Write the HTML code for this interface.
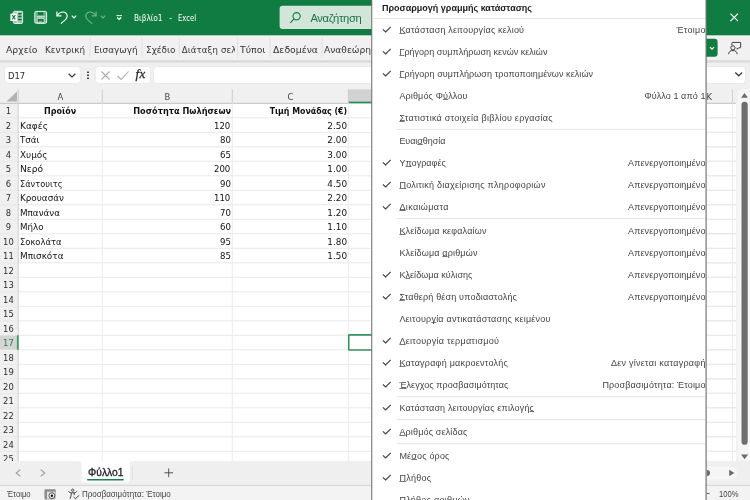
<!DOCTYPE html>
<html lang="el"><head><meta charset="utf-8"><title>Βιβλίο1 - Excel</title>
<style>
html,body{margin:0;padding:0;}
body{width:750px;height:500px;overflow:hidden;position:relative;background:#fff;font-family:"Liberation Sans",sans-serif;}
#app{will-change:transform;position:absolute;left:0;top:0;width:750px;height:500px;overflow:hidden;}
.t{position:absolute;white-space:nowrap;margin:0;padding:0;}
.r{position:absolute;display:block;}
u{text-decoration:underline;text-decoration-thickness:1px;text-underline-offset:0px;text-decoration-color:#777;text-decoration-skip-ink:none;}
</style></head><body><div id="app">
<svg class="r" style="left:0px;top:0px" width="750" height="500"><rect x="0" y="0" width="750" height="500" fill="#f0f0f0"/></svg>
<svg class="r" style="left:0px;top:35px" width="750" height="26"><rect x="0" y="0" width="750" height="26" fill="#f1f1f1"/></svg>
<svg class="r" style="left:0px;top:0px" width="750" height="36"><rect x="0" y="0" width="750" height="35.3" fill="#107c41"/></svg>
<svg class="r" style="left:10px;top:10px;" width="14" height="15"><g transform="translate(0 0)"><rect x="3.4" y="1.3" width="9.2" height="12.2" rx="1.1" fill="rgba(255,255,255,0.6)" stroke="#fff" stroke-width="0.8"/><path d="M8.2 2.9h3.3v1.5H8.2zM8.2 5.8h3.3v1.5H8.2zM8.2 8.7h3.3v1.6H8.2z" fill="#0b6b36"/><path d="M7.6 1.5v2M7.6 11.2v2.2" stroke="#fff" stroke-width="0.7"/><rect x="0.4" y="3.5" width="6.7" height="7.5" rx="0.5" fill="#fff"/><path d="M2.2 5.1l3.1 4.3M5.3 5.1L2.2 9.4" stroke="#107c41" stroke-width="1.15" fill="none"/></g></svg>
<svg class="r" style="left:34px;top:10px;" width="14" height="15"><g transform="translate(0 0)"><rect x="0.8" y="1.4" width="11.8" height="11.9" rx="1.3" fill="rgba(255,255,255,0.4)" stroke="#fff" stroke-width="0.9"/><rect x="3.8" y="2.2" width="5.6" height="3" fill="#0f7a40"/><rect x="2.6" y="5.9" width="8.2" height="1.5" fill="rgba(255,255,255,0.55)"/><path d="M3.2 12.7V9.1a0.8 0.8 0 0 1 0.8-0.8h5.4a0.8 0.8 0 0 1 0.8 0.8v3.6z" fill="#0f7a40" stroke="#fff" stroke-width="0.8"/><rect x="5" y="10.7" width="3.2" height="1.6" fill="rgba(255,255,255,0.4)"/></g></svg>
<svg class="r" style="left:55px;top:10px;" width="14" height="14"><g transform="translate(0 0)"><path d="M1.9 1.4v4.4h4.5" stroke="#fff" stroke-width="1.15" fill="none"/><path d="M2.1 5.6C4.3 2 8.6 1 10.9 3.2c2 1.9 1.4 4.6-0.4 6.4L5.9 13.6" stroke="#fff" stroke-width="1.15" fill="none"/></g></svg>
<svg class="r" style="left:70px;top:14px;" width="8" height="6"><g transform="translate(0.5 0)"><path d="M1.3 1.7L3.5 3.9L5.7 1.7" stroke="#fff" stroke-width="1.2" fill="none"/></g></svg>
<svg class="r" style="left:84px;top:10px;" width="14" height="14"><g transform="translate(0 0)"><g opacity="0.42"><path d="M12.1 1.4v4.4H7.6" stroke="#fff" stroke-width="1.15" fill="none"/><path d="M11.9 5.6C9.7 2 5.4 1 3.1 3.2c-2 1.9-1.4 4.6 0.4 6.4l4.6 4" stroke="#fff" stroke-width="1.15" fill="none"/></g></g></svg>
<svg class="r" style="left:99px;top:14px;" width="8" height="6"><g transform="translate(0.5 0)"><g opacity="0.42"><path d="M1.3 1.7L3.5 3.9L5.7 1.7" stroke="#fff" stroke-width="1.2" fill="none"/></g></g></svg>
<svg class="r" style="left:116px;top:14px;" width="7" height="7"><g transform="translate(0 0)"><path d="M0.4 1.6h5.6" stroke="#fff" stroke-width="1.1" opacity="0.85"/><path d="M1.2 3.5L3.2 5.5L5.2 3.5" stroke="#fff" stroke-width="1.2" fill="none"/></g></svg>
<div class="t" style="left:134.40px;top:13px;font-size:9.0px;line-height:10px;height:10px;color:#fff;transform:scaleX(0.9198);transform-origin:0 50%;font-family:'DejaVu Sans Condensed','DejaVu Sans','Liberation Sans',sans-serif;">Βιβλίο1</div>
<div class="t" style="left:169.30px;top:13px;font-size:9.0px;line-height:10px;height:10px;color:#fff;font-family:'DejaVu Sans Condensed','DejaVu Sans','Liberation Sans',sans-serif;">-</div>
<div class="t" style="left:178.00px;top:13px;font-size:9.0px;line-height:10px;height:10px;color:#fff;transform:scaleX(0.8492);transform-origin:0 50%;font-family:'DejaVu Sans Condensed','DejaVu Sans','Liberation Sans',sans-serif;">Excel</div>
<svg class="r" style="left:279px;top:5px" width="101" height="25"><path d="M3.600 0.700H97.600A3.0 3.0 0 0 1 100.600 3.700V21.100A3.0 3.0 0 0 1 97.600 24.100H3.600A3.0 3.0 0 0 1 0.600 21.100V3.700A3.0 3.0 0 0 1 3.600 0.700Z" fill="#d1e5d9"/></svg>
<svg class="r" style="left:289px;top:11px;" width="13" height="13"><g transform="translate(0 0)"><circle cx="7.6" cy="5.2" r="3.6" fill="none" stroke="#107c41" stroke-width="1.1"/><path d="M5.1 7.8L1.2 11.8" stroke="#107c41" stroke-width="1.1"/></g></svg>
<div class="t" style="left:310.40px;top:12px;font-size:11.2px;line-height:12px;height:12px;color:#1e7345;letter-spacing:-0.338px;">Αναζήτηση</div>
<svg class="r" style="left:729px;top:11px;" width="12" height="12"><g transform="translate(0 0)"><path d="M1.4 2.6l7.6 7.6M9 2.6l-7.6 7.6" stroke="#fff" stroke-width="1.15" fill="none"/></g></svg>
<div class="t" style="left:5.80px;top:44px;font-size:9.5px;line-height:11px;height:11px;color:#363636;transform:scaleX(1.0882);transform-origin:0 50%;font-family:'DejaVu Sans Condensed','DejaVu Sans','Liberation Sans',sans-serif;">Αρχείο</div>
<div class="t" style="left:45.30px;top:44px;font-size:9.5px;line-height:11px;height:11px;color:#363636;transform:scaleX(1.0279);transform-origin:0 50%;font-family:'DejaVu Sans Condensed','DejaVu Sans','Liberation Sans',sans-serif;">Κεντρική</div>
<div class="t" style="left:94.00px;top:44px;font-size:9.5px;line-height:11px;height:11px;color:#363636;transform:scaleX(1.0349);transform-origin:0 50%;font-family:'DejaVu Sans Condensed','DejaVu Sans','Liberation Sans',sans-serif;">Εισαγωγή</div>
<div class="t" style="left:145.80px;top:44px;font-size:9.5px;line-height:11px;height:11px;color:#363636;transform:scaleX(1.0424);transform-origin:0 50%;font-family:'DejaVu Sans Condensed','DejaVu Sans','Liberation Sans',sans-serif;">Σχέδιο</div>
<div class="t" style="left:181.80px;top:44px;font-size:9.5px;line-height:11px;height:11px;color:#363636;letter-spacing:0.131px;font-family:'DejaVu Sans Condensed','DejaVu Sans','Liberation Sans',sans-serif;width:52.80px;overflow:hidden;">Διάταξη σελίδας</div>
<div class="t" style="left:240.00px;top:44px;font-size:9.5px;line-height:11px;height:11px;color:#363636;transform:scaleX(1.0885);transform-origin:0 50%;font-family:'DejaVu Sans Condensed','DejaVu Sans','Liberation Sans',sans-serif;">Τύποι</div>
<div class="t" style="left:273.00px;top:44px;font-size:9.5px;line-height:11px;height:11px;color:#363636;transform:scaleX(1.0873);transform-origin:0 50%;font-family:'DejaVu Sans Condensed','DejaVu Sans','Liberation Sans',sans-serif;">Δεδομένα</div>
<div class="t" style="left:324.00px;top:44px;font-size:9.5px;line-height:11px;height:11px;color:#363636;transform:scaleX(1.0666);transform-origin:0 50%;font-family:'DejaVu Sans Condensed','DejaVu Sans','Liberation Sans',sans-serif;">Αναθεώρηση</div>
<svg class="r" style="left:89px;top:38px" width="2" height="20"><rect x="0.5" y="0" width="1" height="19.3" fill="#e2e2e2"/></svg>
<svg class="r" style="left:141px;top:38px" width="2" height="20"><rect x="0.5" y="0" width="1" height="19.3" fill="#e2e2e2"/></svg>
<svg class="r" style="left:179px;top:38px" width="1" height="20"><rect x="0" y="0" width="1" height="19.3" fill="#e2e2e2"/></svg>
<svg class="r" style="left:237px;top:38px" width="1" height="20"><rect x="0" y="0" width="1" height="19.3" fill="#e2e2e2"/></svg>
<svg class="r" style="left:269px;top:38px" width="2" height="20"><rect x="0.5" y="0" width="1" height="19.3" fill="#e2e2e2"/></svg>
<svg class="r" style="left:321px;top:38px" width="2" height="20"><rect x="0.5" y="0" width="1" height="19.3" fill="#e2e2e2"/></svg>
<svg class="r" style="left:700px;top:38px" width="18" height="19"><path d="M0.000 0.800H14.600A3.0 3.0 0 0 1 17.600 3.800V15.800A3.0 3.0 0 0 1 14.600 18.800H0.000V0.800Z" fill="#107c41"/></svg>
<svg class="r" style="left:708px;top:45px;" width="8" height="7"><g transform="translate(0.5 0.3)"><path d="M1.4 1.8L3.5 3.9L5.6 1.8" stroke="#fff" stroke-width="1.1" fill="none"/></g></svg>
<svg class="r" style="left:728px;top:41px;" width="14" height="14"><g transform="translate(0 0)"><path d="M3.9 4.6V2a0.6 0.6 0 0 1 0.6-0.6h7.6a0.6 0.6 0 0 1 0.6 0.6v4.2a0.6 0.6 0 0 1-0.6 0.6h-1.4l-1.5 1.5V6.9" stroke="#333" stroke-width="0.95" fill="none"/><circle cx="4.9" cy="6.9" r="2.1" fill="#f1f1f1" stroke="#333" stroke-width="0.95"/><path d="M0.6 13.2c0.3-2.7 1.9-3.7 4.3-3.7s4 1 4.3 3.7" stroke="#333" stroke-width="0.95" fill="none"/></g></svg>
<div class="r" style="left:0px;top:60.2px;width:750px;height:3px;background:linear-gradient(#e6e6e6,#d6d6d6 40%,#e8e8e8);"></div>
<div class="r" style="left:5px;top:66.7px;width:75px;height:16.6px;background:#fff;border-radius:3px;box-shadow:0 0 0 0.5px #e3e3e3;"></div>
<div class="t" style="left:8.30px;top:70px;font-size:9.3px;line-height:11px;height:11px;color:#2b2b2b;transform:scaleX(1.0007);transform-origin:0 50%;font-family:'DejaVu Sans Condensed','DejaVu Sans','Liberation Sans',sans-serif;">D17</div>
<svg class="r" style="left:67px;top:71px;" width="10" height="9"><g transform="translate(0.5 0.5)"><path d="M1.1 2.2L4.5 5.5L7.9 2.2" stroke="#3a3a3a" stroke-width="1.2" fill="none"/></g></svg>
<svg class="r" style="left:87px;top:71px" width="2" height="2"><path d="M0.500 0.500H1.500A0.5 0.5 0 0 1 2.000 1.000V1.400A0.5 0.5 0 0 1 1.500 1.900H0.500A0.5 0.5 0 0 1 0.000 1.400V1.000A0.5 0.5 0 0 1 0.500 0.500Z" fill="#3a3a3a"/></svg>
<svg class="r" style="left:87px;top:74px" width="2" height="2"><path d="M0.500 0.600H1.500A0.5 0.5 0 0 1 2.000 1.100V1.500A0.5 0.5 0 0 1 1.500 2.000H0.500A0.5 0.5 0 0 1 0.000 1.500V1.100A0.5 0.5 0 0 1 0.500 0.600Z" fill="#3a3a3a"/></svg>
<svg class="r" style="left:87px;top:77px" width="2" height="2"><path d="M0.500 0.600H1.500A0.5 0.5 0 0 1 2.000 1.100V1.500A0.5 0.5 0 0 1 1.500 2.000H0.500A0.5 0.5 0 0 1 0.000 1.500V1.100A0.5 0.5 0 0 1 0.500 0.600Z" fill="#3a3a3a"/></svg>
<div class="r" style="left:96px;top:66.7px;width:54px;height:16.6px;background:#fff;border-radius:3px;box-shadow:0 0 0 0.5px #e3e3e3;"></div>
<svg class="r" style="left:100px;top:70px;" width="11" height="11"><g transform="translate(0.5 0.5)"><path d="M1 1l8 8M9 1l-8 8" stroke="#acacac" stroke-width="1.1" fill="none"/></g></svg>
<svg class="r" style="left:116px;top:70px;" width="14" height="11"><g transform="translate(0.5 0.5)"><path d="M1 5.5l3.6 3.5L12 1" stroke="#acacac" stroke-width="1.1" fill="none"/></g></svg>
<div class="t" style="left:135.60px;top:66px;font-size:13px;line-height:15px;height:15px;color:#2a2a2a;font-family:'Liberation Serif',serif;font-style:italic;letter-spacing:0.3px;-webkit-text-stroke:0.3px #2a2a2a;">fx</div>
<div class="r" style="left:153.5px;top:66.7px;width:591.7px;height:16.6px;background:#fff;border-radius:3px;box-shadow:0 0 0 0.5px #e3e3e3;"></div>
<svg class="r" style="left:734px;top:70px;" width="10" height="9"><g transform="translate(0.2 0.3)"><path d="M1.1 2.2L4.5 5.5L7.9 2.2" stroke="#3a3a3a" stroke-width="1.2" fill="none"/></g></svg>
<svg class="r" style="left:18px;top:103px" width="751" height="360"><rect x="0.3" y="0.3" width="750" height="359.7" fill="#fff"/></svg>
<svg class="r" style="left:348px;top:89px" width="31" height="14"><rect x="0.3" y="0.4" width="30" height="13" fill="#d2d2d2"/></svg>
<svg class="r" style="left:348px;top:101px" width="31" height="3"><rect x="0.3" y="0.6" width="30" height="1.8" fill="#2a8f56"/></svg>
<svg class="r" style="left:5px;top:90px;" width="13" height="13"><g transform="translate(0 0)"><path d="M12 1.5V11.5H1.5Z" fill="#b2b2b2"/></g></svg>
<svg class="r" style="left:0px;top:102px" width="349" height="2"><rect x="0" y="0.8" width="348.3" height="1.1" fill="#c6c6c6"/></svg>
<svg class="r" style="left:17px;top:89px" width="2" height="15"><rect x="0.8" y="0.5" width="1" height="14" fill="#cdcdcd"/></svg>
<svg class="r" style="left:101px;top:89px" width="2" height="15"><rect x="0.8" y="0.5" width="1" height="14" fill="#cdcdcd"/></svg>
<svg class="r" style="left:231px;top:89px" width="2" height="15"><rect x="0.8" y="0.5" width="1" height="14" fill="#cdcdcd"/></svg>
<svg class="r" style="left:347px;top:89px" width="2" height="15"><rect x="0.8" y="0.5" width="1" height="14" fill="#cdcdcd"/></svg>
<div class="t" style="left:57.44px;top:91px;font-size:9.3px;line-height:11px;height:11px;color:#444;font-family:'DejaVu Sans Condensed','DejaVu Sans','Liberation Sans',sans-serif;">A</div>
<div class="t" style="left:164.43px;top:91px;font-size:9.3px;line-height:11px;height:11px;color:#444;font-family:'DejaVu Sans Condensed','DejaVu Sans','Liberation Sans',sans-serif;">B</div>
<div class="t" style="left:287.38px;top:91px;font-size:9.3px;line-height:11px;height:11px;color:#444;font-family:'DejaVu Sans Condensed','DejaVu Sans','Liberation Sans',sans-serif;">C</div>
<svg class="r" style="left:0px;top:117px" width="750" height="2"><rect x="0" y="0.3" width="750" height="1" fill="#e9e9e9"/></svg>
<svg class="r" style="left:0px;top:131px" width="750" height="2"><rect x="0" y="0.8" width="750" height="1" fill="#e9e9e9"/></svg>
<svg class="r" style="left:0px;top:146px" width="750" height="2"><rect x="0" y="0.3" width="750" height="1" fill="#e9e9e9"/></svg>
<svg class="r" style="left:0px;top:160px" width="750" height="2"><rect x="0" y="0.8" width="750" height="1" fill="#e9e9e9"/></svg>
<svg class="r" style="left:0px;top:175px" width="750" height="2"><rect x="0" y="0.3" width="750" height="1" fill="#e9e9e9"/></svg>
<svg class="r" style="left:0px;top:189px" width="750" height="2"><rect x="0" y="0.8" width="750" height="1" fill="#e9e9e9"/></svg>
<svg class="r" style="left:0px;top:204px" width="750" height="2"><rect x="0" y="0.3" width="750" height="1" fill="#e9e9e9"/></svg>
<svg class="r" style="left:0px;top:218px" width="750" height="2"><rect x="0" y="0.8" width="750" height="1" fill="#e9e9e9"/></svg>
<svg class="r" style="left:0px;top:233px" width="750" height="2"><rect x="0" y="0.3" width="750" height="1" fill="#e9e9e9"/></svg>
<svg class="r" style="left:0px;top:247px" width="750" height="2"><rect x="0" y="0.8" width="750" height="1" fill="#e9e9e9"/></svg>
<svg class="r" style="left:0px;top:262px" width="750" height="2"><rect x="0" y="0.3" width="750" height="1" fill="#e9e9e9"/></svg>
<svg class="r" style="left:0px;top:276px" width="750" height="2"><rect x="0" y="0.8" width="750" height="1" fill="#e9e9e9"/></svg>
<svg class="r" style="left:0px;top:291px" width="750" height="2"><rect x="0" y="0.3" width="750" height="1" fill="#e9e9e9"/></svg>
<svg class="r" style="left:0px;top:305px" width="750" height="2"><rect x="0" y="0.8" width="750" height="1" fill="#e9e9e9"/></svg>
<svg class="r" style="left:0px;top:320px" width="750" height="2"><rect x="0" y="0.3" width="750" height="1" fill="#e9e9e9"/></svg>
<svg class="r" style="left:0px;top:334px" width="750" height="2"><rect x="0" y="0.8" width="750" height="1" fill="#e9e9e9"/></svg>
<svg class="r" style="left:0px;top:349px" width="750" height="2"><rect x="0" y="0.3" width="750" height="1" fill="#e9e9e9"/></svg>
<svg class="r" style="left:0px;top:363px" width="750" height="2"><rect x="0" y="0.8" width="750" height="1" fill="#e9e9e9"/></svg>
<svg class="r" style="left:0px;top:378px" width="750" height="2"><rect x="0" y="0.3" width="750" height="1" fill="#e9e9e9"/></svg>
<svg class="r" style="left:0px;top:392px" width="750" height="2"><rect x="0" y="0.8" width="750" height="1" fill="#e9e9e9"/></svg>
<svg class="r" style="left:0px;top:407px" width="750" height="2"><rect x="0" y="0.3" width="750" height="1" fill="#e9e9e9"/></svg>
<svg class="r" style="left:0px;top:421px" width="750" height="2"><rect x="0" y="0.8" width="750" height="1" fill="#e9e9e9"/></svg>
<svg class="r" style="left:0px;top:436px" width="750" height="2"><rect x="0" y="0.3" width="750" height="1" fill="#e9e9e9"/></svg>
<svg class="r" style="left:0px;top:450px" width="750" height="2"><rect x="0" y="0.8" width="750" height="1" fill="#e9e9e9"/></svg>
<svg class="r" style="left:0px;top:465px" width="750" height="2"><rect x="0" y="0.3" width="750" height="1" fill="#e9e9e9"/></svg>
<svg class="r" style="left:101px;top:103px" width="2" height="359"><rect x="0.8" y="0.3" width="1" height="358.7" fill="#ebebeb"/></svg>
<svg class="r" style="left:231px;top:103px" width="2" height="359"><rect x="0.8" y="0.3" width="1" height="358.7" fill="#ebebeb"/></svg>
<svg class="r" style="left:347px;top:103px" width="2" height="359"><rect x="0.8" y="0.3" width="1" height="358.7" fill="#ebebeb"/></svg>
<svg class="r" style="left:17px;top:103px" width="2" height="359"><rect x="0.7" y="0.3" width="1" height="358.7" fill="#cfcfcf"/></svg>
<svg class="r" style="left:0px;top:335px" width="18" height="15"><rect x="0" y="0.6" width="17.7" height="13.9" fill="#d4d4d4"/></svg>
<svg class="r" style="left:16px;top:335px" width="3" height="15"><rect x="0.9" y="0.3" width="1.8" height="14.5" fill="#3f9868"/></svg>
<div class="t" style="left:5.74px;top:105px;font-size:9.3px;line-height:11px;height:11px;color:#2e2e2e;font-family:'DejaVu Sans Condensed','DejaVu Sans','Liberation Sans',sans-serif;">1</div>
<div class="t" style="left:5.74px;top:120px;font-size:9.3px;line-height:11px;height:11px;color:#2e2e2e;font-family:'DejaVu Sans Condensed','DejaVu Sans','Liberation Sans',sans-serif;">2</div>
<div class="t" style="left:5.74px;top:134px;font-size:9.3px;line-height:11px;height:11px;color:#2e2e2e;font-family:'DejaVu Sans Condensed','DejaVu Sans','Liberation Sans',sans-serif;">3</div>
<div class="t" style="left:5.74px;top:149px;font-size:9.3px;line-height:11px;height:11px;color:#2e2e2e;font-family:'DejaVu Sans Condensed','DejaVu Sans','Liberation Sans',sans-serif;">4</div>
<div class="t" style="left:5.74px;top:163px;font-size:9.3px;line-height:11px;height:11px;color:#2e2e2e;font-family:'DejaVu Sans Condensed','DejaVu Sans','Liberation Sans',sans-serif;">5</div>
<div class="t" style="left:5.74px;top:178px;font-size:9.3px;line-height:11px;height:11px;color:#2e2e2e;font-family:'DejaVu Sans Condensed','DejaVu Sans','Liberation Sans',sans-serif;">6</div>
<div class="t" style="left:5.74px;top:192px;font-size:9.3px;line-height:11px;height:11px;color:#2e2e2e;font-family:'DejaVu Sans Condensed','DejaVu Sans','Liberation Sans',sans-serif;">7</div>
<div class="t" style="left:5.74px;top:207px;font-size:9.3px;line-height:11px;height:11px;color:#2e2e2e;font-family:'DejaVu Sans Condensed','DejaVu Sans','Liberation Sans',sans-serif;">8</div>
<div class="t" style="left:5.74px;top:221px;font-size:9.3px;line-height:11px;height:11px;color:#2e2e2e;font-family:'DejaVu Sans Condensed','DejaVu Sans','Liberation Sans',sans-serif;">9</div>
<div class="t" style="left:3.08px;top:236px;font-size:9.3px;line-height:11px;height:11px;color:#2e2e2e;font-family:'DejaVu Sans Condensed','DejaVu Sans','Liberation Sans',sans-serif;">10</div>
<div class="t" style="left:3.08px;top:250px;font-size:9.3px;line-height:11px;height:11px;color:#2e2e2e;font-family:'DejaVu Sans Condensed','DejaVu Sans','Liberation Sans',sans-serif;">11</div>
<div class="t" style="left:3.08px;top:265px;font-size:9.3px;line-height:11px;height:11px;color:#2e2e2e;font-family:'DejaVu Sans Condensed','DejaVu Sans','Liberation Sans',sans-serif;">12</div>
<div class="t" style="left:3.08px;top:279px;font-size:9.3px;line-height:11px;height:11px;color:#2e2e2e;font-family:'DejaVu Sans Condensed','DejaVu Sans','Liberation Sans',sans-serif;">13</div>
<div class="t" style="left:3.08px;top:294px;font-size:9.3px;line-height:11px;height:11px;color:#2e2e2e;font-family:'DejaVu Sans Condensed','DejaVu Sans','Liberation Sans',sans-serif;">14</div>
<div class="t" style="left:3.08px;top:308px;font-size:9.3px;line-height:11px;height:11px;color:#2e2e2e;font-family:'DejaVu Sans Condensed','DejaVu Sans','Liberation Sans',sans-serif;">15</div>
<div class="t" style="left:3.08px;top:323px;font-size:9.3px;line-height:11px;height:11px;color:#2e2e2e;font-family:'DejaVu Sans Condensed','DejaVu Sans','Liberation Sans',sans-serif;">16</div>
<div class="t" style="left:3.08px;top:337px;font-size:9.3px;line-height:11px;height:11px;color:#2a7a50;font-family:'DejaVu Sans Condensed','DejaVu Sans','Liberation Sans',sans-serif;">17</div>
<div class="t" style="left:3.08px;top:352px;font-size:9.3px;line-height:11px;height:11px;color:#2e2e2e;font-family:'DejaVu Sans Condensed','DejaVu Sans','Liberation Sans',sans-serif;">18</div>
<div class="t" style="left:3.08px;top:366px;font-size:9.3px;line-height:11px;height:11px;color:#2e2e2e;font-family:'DejaVu Sans Condensed','DejaVu Sans','Liberation Sans',sans-serif;">19</div>
<div class="t" style="left:3.08px;top:381px;font-size:9.3px;line-height:11px;height:11px;color:#2e2e2e;font-family:'DejaVu Sans Condensed','DejaVu Sans','Liberation Sans',sans-serif;">20</div>
<div class="t" style="left:3.08px;top:395px;font-size:9.3px;line-height:11px;height:11px;color:#2e2e2e;font-family:'DejaVu Sans Condensed','DejaVu Sans','Liberation Sans',sans-serif;">21</div>
<div class="t" style="left:3.08px;top:410px;font-size:9.3px;line-height:11px;height:11px;color:#2e2e2e;font-family:'DejaVu Sans Condensed','DejaVu Sans','Liberation Sans',sans-serif;">22</div>
<div class="t" style="left:3.08px;top:424px;font-size:9.3px;line-height:11px;height:11px;color:#2e2e2e;font-family:'DejaVu Sans Condensed','DejaVu Sans','Liberation Sans',sans-serif;">23</div>
<div class="t" style="left:3.08px;top:439px;font-size:9.3px;line-height:11px;height:11px;color:#2e2e2e;font-family:'DejaVu Sans Condensed','DejaVu Sans','Liberation Sans',sans-serif;">24</div>
<div class="t" style="left:3.08px;top:453px;font-size:9.3px;line-height:11px;height:11px;color:#2e2e2e;font-family:'DejaVu Sans Condensed','DejaVu Sans','Liberation Sans',sans-serif;">25</div>
<div class="t" style="left:43.21px;top:105px;font-size:9.5px;line-height:11px;height:11px;color:#111;transform:scaleX(0.9365);transform-origin:50% 50%;font-weight:bold;font-family:'DejaVu Sans Condensed','DejaVu Sans','Liberation Sans',sans-serif;">Προϊόν</div>
<div class="t" style="left:128.85px;top:105px;font-size:9.5px;line-height:11px;height:11px;color:#111;transform:scaleX(0.9594);transform-origin:100% 50%;font-weight:bold;font-family:'DejaVu Sans Condensed','DejaVu Sans','Liberation Sans',sans-serif;">Ποσότητα Πωλήσεων</div>
<div class="t" style="left:262.87px;top:105px;font-size:9.5px;line-height:11px;height:11px;color:#111;transform:scaleX(0.9212);transform-origin:100% 50%;font-weight:bold;font-family:'DejaVu Sans Condensed','DejaVu Sans','Liberation Sans',sans-serif;">Τιμή Μονάδας (€)</div>
<div class="t" style="left:20.30px;top:120px;font-size:9.5px;line-height:11px;height:11px;color:#111;transform:scaleX(1.0562);transform-origin:0 50%;font-family:'DejaVu Sans Condensed','DejaVu Sans','Liberation Sans',sans-serif;">Καφές</div>
<div class="t" style="left:214.19px;top:120px;font-size:9.5px;line-height:11px;height:11px;color:#111;transform:scaleX(1.0025);transform-origin:100% 50%;font-family:'DejaVu Sans Condensed','DejaVu Sans','Liberation Sans',sans-serif;">120</div>
<div class="t" style="left:328.18px;top:120px;font-size:9.5px;line-height:11px;height:11px;color:#111;transform:scaleX(1.0356);transform-origin:100% 50%;font-family:'DejaVu Sans Condensed','DejaVu Sans','Liberation Sans',sans-serif;">2.50</div>
<div class="t" style="left:20.30px;top:134px;font-size:9.5px;line-height:11px;height:11px;color:#111;transform:scaleX(1.0176);transform-origin:0 50%;font-family:'DejaVu Sans Condensed','DejaVu Sans','Liberation Sans',sans-serif;">Τσάι</div>
<div class="t" style="left:219.63px;top:134px;font-size:9.5px;line-height:11px;height:11px;color:#111;transform:scaleX(1.0025);transform-origin:100% 50%;font-family:'DejaVu Sans Condensed','DejaVu Sans','Liberation Sans',sans-serif;">80</div>
<div class="t" style="left:328.18px;top:134px;font-size:9.5px;line-height:11px;height:11px;color:#111;transform:scaleX(1.0356);transform-origin:100% 50%;font-family:'DejaVu Sans Condensed','DejaVu Sans','Liberation Sans',sans-serif;">2.00</div>
<div class="t" style="left:20.30px;top:149px;font-size:9.5px;line-height:11px;height:11px;color:#111;transform:scaleX(1.0386);transform-origin:0 50%;font-family:'DejaVu Sans Condensed','DejaVu Sans','Liberation Sans',sans-serif;">Χυμός</div>
<div class="t" style="left:219.63px;top:149px;font-size:9.5px;line-height:11px;height:11px;color:#111;transform:scaleX(1.0025);transform-origin:100% 50%;font-family:'DejaVu Sans Condensed','DejaVu Sans','Liberation Sans',sans-serif;">65</div>
<div class="t" style="left:328.18px;top:149px;font-size:9.5px;line-height:11px;height:11px;color:#111;transform:scaleX(1.0356);transform-origin:100% 50%;font-family:'DejaVu Sans Condensed','DejaVu Sans','Liberation Sans',sans-serif;">3.00</div>
<div class="t" style="left:20.30px;top:163px;font-size:9.5px;line-height:11px;height:11px;color:#111;transform:scaleX(1.0615);transform-origin:0 50%;font-family:'DejaVu Sans Condensed','DejaVu Sans','Liberation Sans',sans-serif;">Νερό</div>
<div class="t" style="left:214.19px;top:163px;font-size:9.5px;line-height:11px;height:11px;color:#111;transform:scaleX(1.0025);transform-origin:100% 50%;font-family:'DejaVu Sans Condensed','DejaVu Sans','Liberation Sans',sans-serif;">200</div>
<div class="t" style="left:328.18px;top:163px;font-size:9.5px;line-height:11px;height:11px;color:#111;transform:scaleX(1.0356);transform-origin:100% 50%;font-family:'DejaVu Sans Condensed','DejaVu Sans','Liberation Sans',sans-serif;">1.00</div>
<div class="t" style="left:20.30px;top:178px;font-size:9.5px;line-height:11px;height:11px;color:#111;transform:scaleX(0.9621);transform-origin:0 50%;font-family:'DejaVu Sans Condensed','DejaVu Sans','Liberation Sans',sans-serif;">Σάντουιτς</div>
<div class="t" style="left:219.63px;top:178px;font-size:9.5px;line-height:11px;height:11px;color:#111;transform:scaleX(1.0025);transform-origin:100% 50%;font-family:'DejaVu Sans Condensed','DejaVu Sans','Liberation Sans',sans-serif;">90</div>
<div class="t" style="left:328.18px;top:178px;font-size:9.5px;line-height:11px;height:11px;color:#111;transform:scaleX(1.0356);transform-origin:100% 50%;font-family:'DejaVu Sans Condensed','DejaVu Sans','Liberation Sans',sans-serif;">4.50</div>
<div class="t" style="left:20.30px;top:192px;font-size:9.5px;line-height:11px;height:11px;color:#111;transform:scaleX(1.0312);transform-origin:0 50%;font-family:'DejaVu Sans Condensed','DejaVu Sans','Liberation Sans',sans-serif;">Κρουασάν</div>
<div class="t" style="left:214.19px;top:192px;font-size:9.5px;line-height:11px;height:11px;color:#111;transform:scaleX(1.0025);transform-origin:100% 50%;font-family:'DejaVu Sans Condensed','DejaVu Sans','Liberation Sans',sans-serif;">110</div>
<div class="t" style="left:328.18px;top:192px;font-size:9.5px;line-height:11px;height:11px;color:#111;transform:scaleX(1.0356);transform-origin:100% 50%;font-family:'DejaVu Sans Condensed','DejaVu Sans','Liberation Sans',sans-serif;">2.20</div>
<div class="t" style="left:20.30px;top:207px;font-size:9.5px;line-height:11px;height:11px;color:#111;transform:scaleX(1.0263);transform-origin:0 50%;font-family:'DejaVu Sans Condensed','DejaVu Sans','Liberation Sans',sans-serif;">Μπανάνα</div>
<div class="t" style="left:219.63px;top:207px;font-size:9.5px;line-height:11px;height:11px;color:#111;transform:scaleX(1.0025);transform-origin:100% 50%;font-family:'DejaVu Sans Condensed','DejaVu Sans','Liberation Sans',sans-serif;">70</div>
<div class="t" style="left:328.18px;top:207px;font-size:9.5px;line-height:11px;height:11px;color:#111;transform:scaleX(1.0356);transform-origin:100% 50%;font-family:'DejaVu Sans Condensed','DejaVu Sans','Liberation Sans',sans-serif;">1.20</div>
<div class="t" style="left:20.30px;top:221px;font-size:9.5px;line-height:11px;height:11px;color:#111;transform:scaleX(1.0183);transform-origin:0 50%;font-family:'DejaVu Sans Condensed','DejaVu Sans','Liberation Sans',sans-serif;">Μήλο</div>
<div class="t" style="left:219.63px;top:221px;font-size:9.5px;line-height:11px;height:11px;color:#111;transform:scaleX(1.0025);transform-origin:100% 50%;font-family:'DejaVu Sans Condensed','DejaVu Sans','Liberation Sans',sans-serif;">60</div>
<div class="t" style="left:328.18px;top:221px;font-size:9.5px;line-height:11px;height:11px;color:#111;transform:scaleX(1.0356);transform-origin:100% 50%;font-family:'DejaVu Sans Condensed','DejaVu Sans','Liberation Sans',sans-serif;">1.10</div>
<div class="t" style="left:20.30px;top:236px;font-size:9.5px;line-height:11px;height:11px;color:#111;transform:scaleX(0.9796);transform-origin:0 50%;font-family:'DejaVu Sans Condensed','DejaVu Sans','Liberation Sans',sans-serif;">Σοκολάτα</div>
<div class="t" style="left:219.63px;top:236px;font-size:9.5px;line-height:11px;height:11px;color:#111;transform:scaleX(1.0025);transform-origin:100% 50%;font-family:'DejaVu Sans Condensed','DejaVu Sans','Liberation Sans',sans-serif;">95</div>
<div class="t" style="left:328.18px;top:236px;font-size:9.5px;line-height:11px;height:11px;color:#111;transform:scaleX(1.0356);transform-origin:100% 50%;font-family:'DejaVu Sans Condensed','DejaVu Sans','Liberation Sans',sans-serif;">1.80</div>
<div class="t" style="left:20.30px;top:250px;font-size:9.5px;line-height:11px;height:11px;color:#111;transform:scaleX(1.0388);transform-origin:0 50%;font-family:'DejaVu Sans Condensed','DejaVu Sans','Liberation Sans',sans-serif;">Μπισκότα</div>
<div class="t" style="left:219.63px;top:250px;font-size:9.5px;line-height:11px;height:11px;color:#111;transform:scaleX(1.0025);transform-origin:100% 50%;font-family:'DejaVu Sans Condensed','DejaVu Sans','Liberation Sans',sans-serif;">85</div>
<div class="t" style="left:328.18px;top:250px;font-size:9.5px;line-height:11px;height:11px;color:#111;transform:scaleX(1.0356);transform-origin:100% 50%;font-family:'DejaVu Sans Condensed','DejaVu Sans','Liberation Sans',sans-serif;">1.50</div>
<svg class="r" style="left:347px;top:333px;" width="30" height="19"><g transform="translate(0 0)"><rect x="1.75" y="1.85" width="30" height="15.1" rx="0.5" fill="none" stroke="#3a9163" stroke-width="1.6"/></g></svg>
<div class="t" style="left:706.40px;top:91px;font-size:9.3px;line-height:11px;height:11px;color:#444;font-family:'DejaVu Sans Condensed','DejaVu Sans','Liberation Sans',sans-serif;">K</div>
<svg class="r" style="left:707px;top:102px" width="29" height="2"><rect x="0" y="0.8" width="29" height="1.1" fill="#c6c6c6"/></svg>
<svg class="r" style="left:732px;top:89px" width="1" height="14"><rect x="0" y="0.5" width="1" height="13.5" fill="#d0d0d0"/></svg>
<svg class="r" style="left:708px;top:117px" width="28" height="2"><rect x="0" y="0.3" width="28" height="1" fill="#e9e9e9"/></svg>
<svg class="r" style="left:708px;top:131px" width="28" height="2"><rect x="0" y="0.8" width="28" height="1" fill="#e9e9e9"/></svg>
<svg class="r" style="left:708px;top:146px" width="28" height="2"><rect x="0" y="0.3" width="28" height="1" fill="#e9e9e9"/></svg>
<svg class="r" style="left:708px;top:160px" width="28" height="2"><rect x="0" y="0.8" width="28" height="1" fill="#e9e9e9"/></svg>
<svg class="r" style="left:708px;top:175px" width="28" height="2"><rect x="0" y="0.3" width="28" height="1" fill="#e9e9e9"/></svg>
<svg class="r" style="left:708px;top:189px" width="28" height="2"><rect x="0" y="0.8" width="28" height="1" fill="#e9e9e9"/></svg>
<svg class="r" style="left:708px;top:204px" width="28" height="2"><rect x="0" y="0.3" width="28" height="1" fill="#e9e9e9"/></svg>
<svg class="r" style="left:708px;top:218px" width="28" height="2"><rect x="0" y="0.8" width="28" height="1" fill="#e9e9e9"/></svg>
<svg class="r" style="left:708px;top:233px" width="28" height="2"><rect x="0" y="0.3" width="28" height="1" fill="#e9e9e9"/></svg>
<svg class="r" style="left:708px;top:247px" width="28" height="2"><rect x="0" y="0.8" width="28" height="1" fill="#e9e9e9"/></svg>
<svg class="r" style="left:708px;top:262px" width="28" height="2"><rect x="0" y="0.3" width="28" height="1" fill="#e9e9e9"/></svg>
<svg class="r" style="left:708px;top:276px" width="28" height="2"><rect x="0" y="0.8" width="28" height="1" fill="#e9e9e9"/></svg>
<svg class="r" style="left:708px;top:291px" width="28" height="2"><rect x="0" y="0.3" width="28" height="1" fill="#e9e9e9"/></svg>
<svg class="r" style="left:708px;top:305px" width="28" height="2"><rect x="0" y="0.8" width="28" height="1" fill="#e9e9e9"/></svg>
<svg class="r" style="left:708px;top:320px" width="28" height="2"><rect x="0" y="0.3" width="28" height="1" fill="#e9e9e9"/></svg>
<svg class="r" style="left:708px;top:334px" width="28" height="2"><rect x="0" y="0.8" width="28" height="1" fill="#e9e9e9"/></svg>
<svg class="r" style="left:708px;top:349px" width="28" height="2"><rect x="0" y="0.3" width="28" height="1" fill="#e9e9e9"/></svg>
<svg class="r" style="left:708px;top:363px" width="28" height="2"><rect x="0" y="0.8" width="28" height="1" fill="#e9e9e9"/></svg>
<svg class="r" style="left:708px;top:378px" width="28" height="2"><rect x="0" y="0.3" width="28" height="1" fill="#e9e9e9"/></svg>
<svg class="r" style="left:708px;top:392px" width="28" height="2"><rect x="0" y="0.8" width="28" height="1" fill="#e9e9e9"/></svg>
<svg class="r" style="left:708px;top:407px" width="28" height="2"><rect x="0" y="0.3" width="28" height="1" fill="#e9e9e9"/></svg>
<svg class="r" style="left:708px;top:421px" width="28" height="2"><rect x="0" y="0.8" width="28" height="1" fill="#e9e9e9"/></svg>
<svg class="r" style="left:708px;top:436px" width="28" height="2"><rect x="0" y="0.3" width="28" height="1" fill="#e9e9e9"/></svg>
<svg class="r" style="left:708px;top:450px" width="28" height="2"><rect x="0" y="0.8" width="28" height="1" fill="#e9e9e9"/></svg>
<svg class="r" style="left:708px;top:465px" width="28" height="2"><rect x="0" y="0.3" width="28" height="1" fill="#e9e9e9"/></svg>
<svg class="r" style="left:732px;top:103px" width="1" height="361"><rect x="0" y="0.3" width="1" height="360" fill="#e9e9e9"/></svg>
<svg class="r" style="left:736px;top:88px" width="15" height="375"><rect x="0.2" y="0.4" width="14" height="374" fill="#efefef"/></svg>
<svg class="r" style="left:737px;top:88px" width="15" height="375"><path d="M6.300 0.900H14.300V374.500H6.300A6 6 0 0 1 0.300 368.500V6.900A6 6 0 0 1 6.300 0.900Z" fill="#f6f6f6"/></svg>
<svg class="r" style="left:740px;top:92px;" width="9" height="7"><g transform="translate(0.5 0.6)"><path d="M0.6 5.2L4 0.5L7.4 5.2Z" fill="#6b6b6b"/></g></svg>
<svg class="r" style="left:741px;top:101px" width="7" height="344"><path d="M3.600 0.800H3.600A3.1 3.1 0 0 1 6.700 3.900V340.700A3.1 3.1 0 0 1 3.600 343.800H3.600A3.1 3.1 0 0 1 0.500 340.700V3.900A3.1 3.1 0 0 1 3.600 0.800Z" fill="#6e6e6e"/></svg>
<svg class="r" style="left:740px;top:454px;" width="9" height="6"><g transform="translate(0.6 0)"><path d="M0.5 0.4L4 5.2L7.5 0.4Z" fill="#6b6b6b"/></g></svg>
<svg class="r" style="left:0px;top:461px" width="82" height="25"><path d="M0.000 0.100H78.600A3 3 0 0 1 81.600 3.100V24.500H0.000V0.100Z" fill="#efefef"/></svg>
<svg class="r" style="left:129px;top:461px" width="622" height="25"><path d="M3.600 0.100H621.600V24.500H0.600V3.100A3 3 0 0 1 3.600 0.100Z" fill="#efefef"/></svg>
<svg class="r" style="left:78px;top:470px" width="55" height="16"><rect x="0" y="0" width="55" height="15.2" fill="#efefef"/></svg>
<svg class="r" style="left:14px;top:467px;" width="8" height="12"><g transform="translate(0 0.5)"><path d="M6.3 2.1L2.3 5.5L6.3 8.9" stroke="#a0a0a0" stroke-width="1.2" fill="none"/></g></svg>
<svg class="r" style="left:38px;top:467px;" width="9" height="12"><g transform="translate(0.5 0.5)"><path d="M2.2 2.1L6.2 5.5L2.2 8.9" stroke="#a0a0a0" stroke-width="1.2" fill="none"/></g></svg>
<svg class="r" style="left:81px;top:461px" width="49" height="22"><path d="M0.600 0.100H48.600V17.900A3.5 3.5 0 0 1 45.100 21.400H4.100A3.5 3.5 0 0 1 0.600 17.900V0.100Z" fill="#fff"/></svg>
<div class="t" style="left:88.00px;top:467px;font-size:10.3px;line-height:11px;height:11px;color:#222;letter-spacing:0.030px;-webkit-text-stroke:0.3px #222;">Φύλλο1</div>
<svg class="r" style="left:87px;top:479px" width="37" height="2"><path d="M0.700 0.000H36.100A0.7 0.7 0 0 1 36.800 0.700V0.700A0.7 0.7 0 0 1 36.100 1.400H0.700A0.7 0.7 0 0 1 0.000 0.700V0.700A0.7 0.7 0 0 1 0.700 0.000Z" fill="#17834a"/></svg>
<svg class="r" style="left:131px;top:466px" width="2" height="14"><rect x="0.8" y="0" width="1" height="14" fill="#e0e0e0"/></svg>
<svg class="r" style="left:163px;top:467px;" width="12" height="12"><g transform="translate(0.2 0.3)"><path d="M5.5 1.2v8.6M1.2 5.5h8.6" stroke="#444" stroke-width="0.9" fill="none"/></g></svg>
<svg class="r" style="left:700px;top:466px" width="38" height="14"><path d="M0.000 0.800H31.200A6.3 6.3 0 0 1 37.500 7.100V7.100A6.3 6.3 0 0 1 31.200 13.400H0.000V0.800Z" fill="#f6f6f6"/></svg>
<svg class="r" style="left:707px;top:469px;" width="5" height="8"><g transform="translate(0 0)"><circle cx="0" cy="4" r="3" fill="#6b6b6b"/></g></svg>
<svg class="r" style="left:728px;top:469px;" width="8" height="9"><g transform="translate(0.4 0.4)"><path d="M0.8 0.4L6 3.6L0.8 6.8Z" fill="#6b6b6b"/></g></svg>
<svg class="r" style="left:0px;top:485px" width="750" height="16"><rect x="0" y="0.4" width="750" height="15" fill="#f3f3f3"/></svg>
<svg class="r" style="left:0px;top:484px" width="750" height="2"><rect x="0" y="0.9" width="750" height="1" fill="#d6d6d6"/></svg>
<div class="t" style="left:6.50px;top:489px;font-size:9.0px;line-height:10px;height:10px;color:#444;transform:scaleX(0.8525);transform-origin:0 50%;">Έτοιμο</div>
<svg class="r" style="left:44px;top:489px;" width="13" height="11"><g transform="translate(0 0)"><rect x="0.9" y="0.5" width="10.4" height="9.6" rx="1" fill="#e2e2e2" stroke="#8a8a8a" stroke-width="0.6"/><path d="M0.7 0.4h10.8v2.3H0.7zM0.7 0.4h2.3v9.8H0.7z" fill="#8f8f8f"/><path d="M5.6 0.6v2M8.6 0.6v2" stroke="#9a9a9a" stroke-width="0.6"/><circle cx="7.9" cy="6.7" r="2.9" fill="#f6f6f6" stroke="#444" stroke-width="0.9"/><circle cx="7.9" cy="6.7" r="1.2" fill="#111"/></g></svg>
<svg class="r" style="left:67px;top:488px;" width="13" height="12"><g transform="translate(0 0)"><circle cx="5.7" cy="2.2" r="1.15" fill="none" stroke="#3c3c3c" stroke-width="0.9"/><path d="M1.5 3.2c0.6 1.2 1.6 1.6 2.8 1.6h2.8c1.2 0 2.2-0.4 2.8-1.6" stroke="#3c3c3c" stroke-width="0.95" fill="none"/><path d="M4.2 4.8v2.6l-1.2 3.4M7.2 4.8v2.4" stroke="#3c3c3c" stroke-width="0.95" fill="none"/><path d="M6.6 9l1.8 1.7 3.8-3.4" stroke="#3c3c3c" stroke-width="1" fill="none"/></g></svg>
<div class="t" style="left:81.80px;top:489px;font-size:9.0px;line-height:10px;height:10px;color:#444;transform:scaleX(0.8865);transform-origin:0 50%;">Προσβασιμότητα: Έτοιμο</div>
<svg class="r" style="left:707px;top:493px" width="3" height="1"><rect x="0" y="0" width="2.4" height="1" fill="#555"/></svg>
<div class="t" style="left:718.80px;top:489px;font-size:9.0px;line-height:10px;height:10px;color:#444;transform:scaleX(0.8428);transform-origin:0 50%;">100%</div>
<svg class="r" style="left:371px;top:-2px" width="336" height="506"><rect x="0.2" y="0" width="335.5" height="506" fill="#757575"/></svg>
<svg class="r" style="left:372px;top:-2px" width="334" height="506"><rect x="0.3" y="0" width="333.2" height="506" fill="#fff"/></svg>
<div class="t" style="left:382.00px;top:3px;font-size:9.0px;line-height:10px;height:10px;color:#1a1a1a;letter-spacing:0.001px;font-weight:bold;">Προσαρμογή γραμμής κατάστασης</div>
<svg class="r" style="left:373px;top:18px" width="332" height="1"><rect x="0" y="0" width="332" height="0.9" fill="#e1e1e1"/></svg>
<svg class="r" style="left:382px;top:26px;" width="10" height="7"><g transform="translate(0.4 0.0)"><path d="M0.5 3.4L3.2 5.9L8.3 0.8" stroke="#3c3c3c" stroke-width="1.1" fill="none"/></g></svg>
<div class="t" style="left:399.40px;top:25px;font-size:9.0px;line-height:10px;height:10px;color:#444;letter-spacing:0.191px;"><u>Κ</u>ατάσταση λειτουργίας κελιού</div>
<div class="t" style="left:676.40px;top:25px;font-size:9.0px;line-height:10px;height:10px;color:#444;letter-spacing:0.264px;">Έτοιμο</div>
<svg class="r" style="left:382px;top:48px;" width="10" height="7"><g transform="translate(0.4 0.0)"><path d="M0.5 3.4L3.2 5.9L8.3 0.8" stroke="#3c3c3c" stroke-width="1.1" fill="none"/></g></svg>
<div class="t" style="left:399.40px;top:47px;font-size:9.0px;line-height:10px;height:10px;color:#444;letter-spacing:0.021px;"><u>Γ</u>ρήγορη συμπλήρωση κενών κελιών</div>
<svg class="r" style="left:382px;top:70px;" width="10" height="7"><g transform="translate(0.4 0.0)"><path d="M0.5 3.4L3.2 5.9L8.3 0.8" stroke="#3c3c3c" stroke-width="1.1" fill="none"/></g></svg>
<div class="t" style="left:399.40px;top:69px;font-size:9.0px;line-height:10px;height:10px;color:#444;letter-spacing:0.075px;"><u>Γ</u>ρήγορη συμπλήρωση τροποποιημένων κελιών</div>
<div class="t" style="left:399.40px;top:91px;font-size:9.0px;line-height:10px;height:10px;color:#444;letter-spacing:0.150px;">Αριθμός Φ<u>ύ</u>λλου</div>
<div class="t" style="left:644.40px;top:91px;font-size:9.0px;line-height:10px;height:10px;color:#444;letter-spacing:0.091px;">Φύλλο 1 από 1</div>
<div class="t" style="left:399.40px;top:113px;font-size:9.0px;line-height:10px;height:10px;color:#444;letter-spacing:0.258px;"><u>Σ</u>τατιστικά στοιχεία βιβλίου εργασίας</div>
<svg class="r" style="left:396px;top:128px" width="309" height="2"><rect x="0.5" y="0.9" width="308.5" height="0.9" fill="#e1e1e1"/></svg>
<div class="t" style="left:399.40px;top:136px;font-size:9.0px;line-height:10px;height:10px;color:#444;letter-spacing:-0.050px;">Ευαι<u>σ</u>θησία</div>
<svg class="r" style="left:382px;top:159px;" width="10" height="7"><g transform="translate(0.4 0.0)"><path d="M0.5 3.4L3.2 5.9L8.3 0.8" stroke="#3c3c3c" stroke-width="1.1" fill="none"/></g></svg>
<div class="t" style="left:399.40px;top:158px;font-size:9.0px;line-height:10px;height:10px;color:#444;letter-spacing:0.050px;">Υ<u>π</u>ογραφές</div>
<div class="t" style="left:628.10px;top:158px;font-size:9.0px;line-height:10px;height:10px;color:#444;letter-spacing:0.085px;">Απενεργοποιημένο</div>
<svg class="r" style="left:382px;top:181px;" width="10" height="7"><g transform="translate(0.4 0.0)"><path d="M0.5 3.4L3.2 5.9L8.3 0.8" stroke="#3c3c3c" stroke-width="1.1" fill="none"/></g></svg>
<div class="t" style="left:399.40px;top:180px;font-size:9.0px;line-height:10px;height:10px;color:#444;letter-spacing:0.252px;"><u>Π</u>ολιτική διαχείρισης πληροφοριών</div>
<div class="t" style="left:628.10px;top:180px;font-size:9.0px;line-height:10px;height:10px;color:#444;letter-spacing:0.085px;">Απενεργοποιημένο</div>
<svg class="r" style="left:382px;top:203px;" width="10" height="7"><g transform="translate(0.4 0.0)"><path d="M0.5 3.4L3.2 5.9L8.3 0.8" stroke="#3c3c3c" stroke-width="1.1" fill="none"/></g></svg>
<div class="t" style="left:399.40px;top:202px;font-size:9.0px;line-height:10px;height:10px;color:#444;letter-spacing:0.372px;"><u>Δ</u>ικαιώματα</div>
<div class="t" style="left:628.10px;top:202px;font-size:9.0px;line-height:10px;height:10px;color:#444;letter-spacing:0.085px;">Απενεργοποιημένο</div>
<svg class="r" style="left:396px;top:218px" width="309" height="1"><rect x="0.5" y="0.0" width="308.5" height="0.9" fill="#e1e1e1"/></svg>
<div class="t" style="left:399.40px;top:226px;font-size:9.0px;line-height:10px;height:10px;color:#444;letter-spacing:0.171px;"><u>Κ</u>λείδωμα κεφαλαίων</div>
<div class="t" style="left:628.10px;top:226px;font-size:9.0px;line-height:10px;height:10px;color:#444;letter-spacing:0.085px;">Απενεργοποιημένο</div>
<div class="t" style="left:399.40px;top:248px;font-size:9.0px;line-height:10px;height:10px;color:#444;letter-spacing:0.168px;">Κλείδωμα <u>α</u>ριθμών</div>
<div class="t" style="left:628.10px;top:248px;font-size:9.0px;line-height:10px;height:10px;color:#444;letter-spacing:0.085px;">Απενεργοποιημένο</div>
<svg class="r" style="left:382px;top:271px;" width="10" height="7"><g transform="translate(0.4 0.0)"><path d="M0.5 3.4L3.2 5.9L8.3 0.8" stroke="#3c3c3c" stroke-width="1.1" fill="none"/></g></svg>
<div class="t" style="left:399.40px;top:270px;font-size:9.0px;line-height:10px;height:10px;color:#444;letter-spacing:0.049px;">Κ<u>λ</u>είδωμα κύλισης</div>
<div class="t" style="left:628.10px;top:270px;font-size:9.0px;line-height:10px;height:10px;color:#444;letter-spacing:0.085px;">Απενεργοποιημένο</div>
<svg class="r" style="left:382px;top:293px;" width="10" height="7"><g transform="translate(0.4 0.0)"><path d="M0.5 3.4L3.2 5.9L8.3 0.8" stroke="#3c3c3c" stroke-width="1.1" fill="none"/></g></svg>
<div class="t" style="left:399.40px;top:292px;font-size:9.0px;line-height:10px;height:10px;color:#444;letter-spacing:0.172px;"><u>Σ</u>ταθερή θέση υποδιαστολής</div>
<div class="t" style="left:628.10px;top:292px;font-size:9.0px;line-height:10px;height:10px;color:#444;letter-spacing:0.085px;">Απενεργοποιημένο</div>
<div class="t" style="left:399.40px;top:314px;font-size:9.0px;line-height:10px;height:10px;color:#444;letter-spacing:0.215px;">Λειτουρ<u>γ</u>ία αντικατάστασης κειμένου</div>
<svg class="r" style="left:382px;top:337px;" width="10" height="7"><g transform="translate(0.4 0.0)"><path d="M0.5 3.4L3.2 5.9L8.3 0.8" stroke="#3c3c3c" stroke-width="1.1" fill="none"/></g></svg>
<div class="t" style="left:399.40px;top:336px;font-size:9.0px;line-height:10px;height:10px;color:#444;letter-spacing:0.262px;"><u>Λ</u>ειτουργία τερματισμού</div>
<svg class="r" style="left:382px;top:359px;" width="10" height="7"><g transform="translate(0.4 0.0)"><path d="M0.5 3.4L3.2 5.9L8.3 0.8" stroke="#3c3c3c" stroke-width="1.1" fill="none"/></g></svg>
<div class="t" style="left:399.40px;top:358px;font-size:9.0px;line-height:10px;height:10px;color:#444;letter-spacing:0.237px;"><u>Κ</u>αταγραφή μακροεντολής</div>
<div class="t" style="left:610.90px;top:358px;font-size:9.0px;line-height:10px;height:10px;color:#444;letter-spacing:0.272px;">Δεν γίνεται καταγραφή</div>
<svg class="r" style="left:382px;top:381px;" width="10" height="7"><g transform="translate(0.4 0.0)"><path d="M0.5 3.4L3.2 5.9L8.3 0.8" stroke="#3c3c3c" stroke-width="1.1" fill="none"/></g></svg>
<div class="t" style="left:399.40px;top:380px;font-size:9.0px;line-height:10px;height:10px;color:#444;letter-spacing:0.054px;"><u>Έ</u>λεγχος προσβασιμότητας</div>
<div class="t" style="left:602.40px;top:380px;font-size:9.0px;line-height:10px;height:10px;color:#444;letter-spacing:0.140px;">Προσβασιμότητα: Έτοιμο</div>
<svg class="r" style="left:396px;top:396px" width="309" height="2"><rect x="0.5" y="0.25" width="308.5" height="0.9" fill="#e1e1e1"/></svg>
<svg class="r" style="left:382px;top:404px;" width="10" height="7"><g transform="translate(0.4 0.0)"><path d="M0.5 3.4L3.2 5.9L8.3 0.8" stroke="#3c3c3c" stroke-width="1.1" fill="none"/></g></svg>
<div class="t" style="left:399.40px;top:403px;font-size:9.0px;line-height:10px;height:10px;color:#444;letter-spacing:0.157px;">Κατάσταση λειτουργίας επιλογή<u>ς</u></div>
<svg class="r" style="left:396px;top:419px" width="309" height="2"><rect x="0.5" y="0.2" width="308.5" height="0.9" fill="#e1e1e1"/></svg>
<svg class="r" style="left:382px;top:428px;" width="10" height="7"><g transform="translate(0.4 0.0)"><path d="M0.5 3.4L3.2 5.9L8.3 0.8" stroke="#3c3c3c" stroke-width="1.1" fill="none"/></g></svg>
<div class="t" style="left:399.40px;top:427px;font-size:9.0px;line-height:10px;height:10px;color:#444;letter-spacing:0.159px;"><u>Α</u>ριθμός σελίδας</div>
<svg class="r" style="left:396px;top:443px" width="309" height="2"><rect x="0.5" y="0.3" width="308.5" height="0.9" fill="#e1e1e1"/></svg>
<svg class="r" style="left:382px;top:452px;" width="10" height="7"><g transform="translate(0.4 0.0)"><path d="M0.5 3.4L3.2 5.9L8.3 0.8" stroke="#3c3c3c" stroke-width="1.1" fill="none"/></g></svg>
<div class="t" style="left:399.40px;top:451px;font-size:9.0px;line-height:10px;height:10px;color:#444;letter-spacing:0.180px;">Μέ<u>σ</u>ος όρος</div>
<svg class="r" style="left:382px;top:474px;" width="10" height="7"><g transform="translate(0.4 0.0)"><path d="M0.5 3.4L3.2 5.9L8.3 0.8" stroke="#3c3c3c" stroke-width="1.1" fill="none"/></g></svg>
<div class="t" style="left:399.40px;top:473px;font-size:9.0px;line-height:10px;height:10px;color:#444;letter-spacing:0.249px;"><u>Π</u>λήθος</div>
<div class="t" style="left:399.40px;top:495px;font-size:9.0px;line-height:10px;height:10px;color:#444;letter-spacing:0.239px;">Πλήθος <u>α</u>ριθμών</div>
</div></body></html>
